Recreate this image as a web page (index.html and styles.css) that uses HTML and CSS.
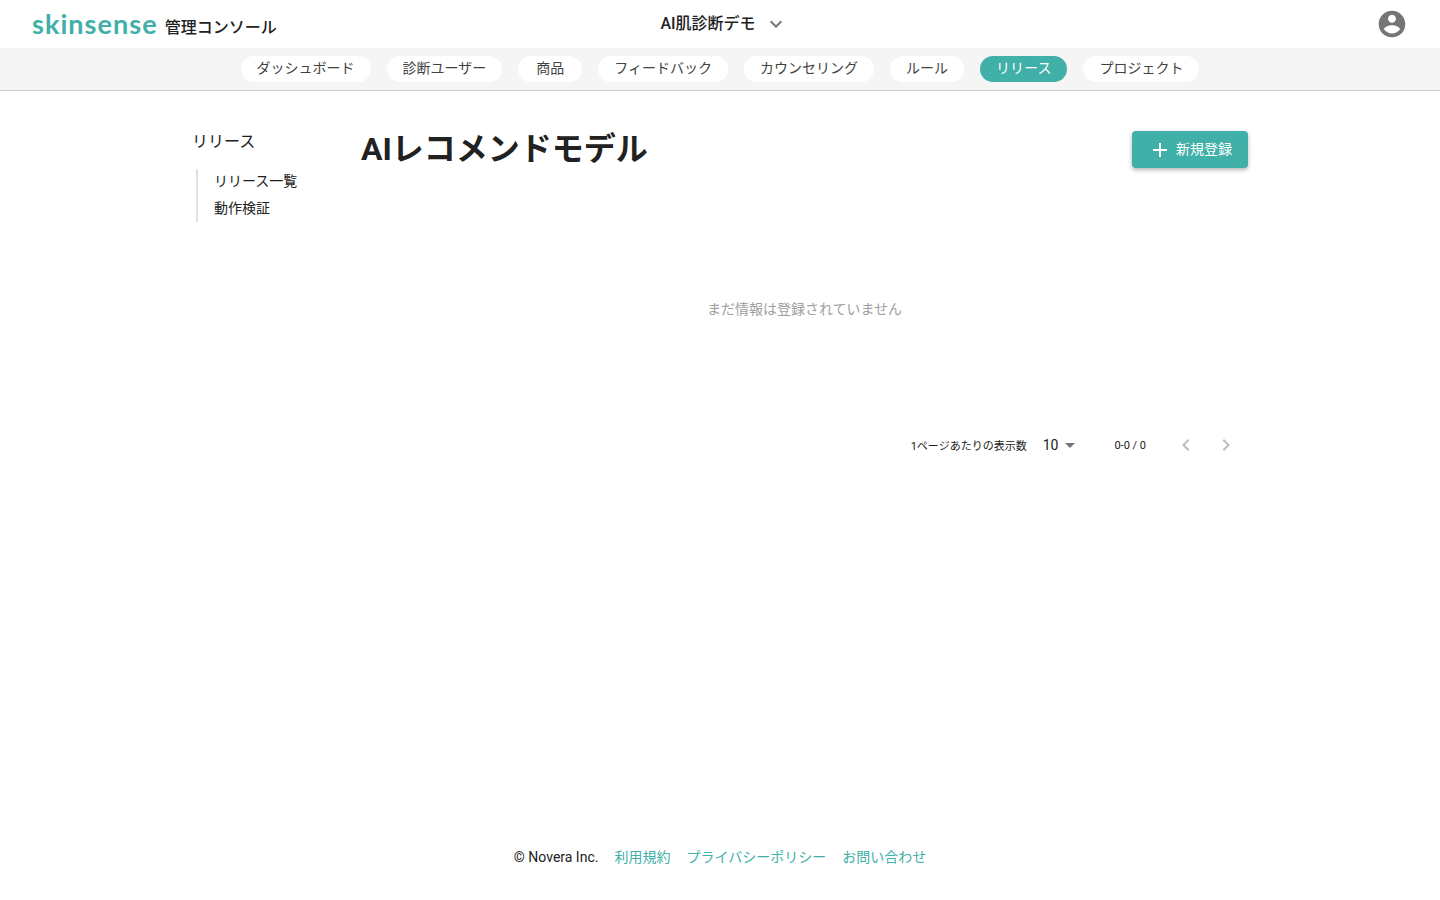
FILE: index.html
```html
<!DOCTYPE html>
<html lang="ja">
<head>
    <meta charset="UTF-8">
    <meta name="viewport" content="width=device-width, initial-scale=1.0">
    <title>AIレコメンドモデル - skinsense 管理コンソール</title>
    <link rel="stylesheet" href="styles.css">
</head>
<body>
    <header class="topbar">
        <div class="brand">
            <span class="logo">skinsense</span>
            <span class="brand-sub">管理コンソール</span>
        </div>
        <div class="tenant">
            <span class="tenant-name">AI肌診断デモ</span>
            <svg class="tenant-arrow" viewBox="0 0 24 24" width="24" height="24"><path d="M7.41 8.59 12 13.17l4.59-4.58L18 10l-6 6-6-6z"/></svg>
        </div>
        <svg class="account" viewBox="0 0 24 24" width="32" height="32"><path d="M12 2C6.48 2 2 6.48 2 12s4.48 10 10 10 10-4.48 10-10S17.52 2 12 2zm0 3c1.66 0 3 1.34 3 3s-1.34 3-3 3-3-1.34-3-3 1.34-3 3-3zm0 14.2c-2.5 0-4.71-1.28-6-3.22.03-1.99 4-3.08 6-3.08 1.99 0 5.97 1.09 6 3.08-1.29 1.94-3.5 3.22-6 3.22z"/></svg>
    </header>

    <nav class="tabs">
        <a class="tab">ダッシュボード</a>
        <a class="tab">診断ユーザー</a>
        <a class="tab">商品</a>
        <a class="tab">フィードバック</a>
        <a class="tab">カウンセリング</a>
        <a class="tab">ルール</a>
        <a class="tab active">リリース</a>
        <a class="tab">プロジェクト</a>
    </nav>

    <div class="page">
        <aside class="side">
            <div class="side-title">リリース</div>
            <ul class="side-list">
                <li>リリース一覧</li>
                <li>動作検証</li>
            </ul>
        </aside>
        <main class="content">
            <div class="content-head">
                <h1>AIレコメンドモデル</h1>
                <button class="add-btn">
                    <svg viewBox="0 0 24 24" width="24" height="24"><path d="M19 13h-6v6h-2v-6H5v-2h6V5h2v6h6v2z"/></svg>
                    <span class="add-label">新規登録</span>
                </button>
            </div>
            <p class="empty">まだ情報は登録されていません</p>
            <div class="pager">
                <span class="pager-label">1ページあたりの表示数</span>
                <span class="pager-select">10<i class="caret"></i></span>
                <span class="pager-range">0-0 / 0</span>
                <svg class="pager-arrow" viewBox="0 0 24 24" width="24" height="24"><path d="M15.41 7.41 14 6l-6 6 6 6 1.41-1.41L10.83 12z"/></svg>
                <svg class="pager-arrow" viewBox="0 0 24 24" width="24" height="24"><path d="M10 6 8.59 7.41 13.17 12l-4.58 4.59L10 18l6-6z"/></svg>
            </div>
        </main>
    </div>

    <footer class="footer">
        <span>© Novera Inc.</span>
        <a>利用規約</a>
        <a>プライバシーポリシー</a>
        <a>お問い合わせ</a>
    </footer>
</body>
</html>
```
FILE: styles.css
```css
* {
    box-sizing: border-box;
}

body {
    margin: 0;
    min-height: 100vh;
    display: flex;
    flex-direction: column;
    background: #fff;
    color: #212121;
    font-family: Roboto, "Noto Sans CJK JP", sans-serif;
    font-size: 14px;
}

.topbar {
    height: 48px;
    display: grid;
    grid-template-columns: 1fr auto 1fr;
    align-items: center;
    padding: 0 32px;
}

.brand {
    display: flex;
    align-items: baseline;
}

.logo {
    font-family: Lato, sans-serif;
    font-size: 27px;
    font-weight: 700;
    letter-spacing: 1.05px;
    color: #40b0a9;
    line-height: 48px;
}

.brand-sub {
    margin-left: 7px;
    font-size: 16px;
    font-weight: 500;
    position: relative;
    top: -1px;
}

.tenant {
    display: flex;
    align-items: center;
    gap: 8px;
    padding-left: 8px;
    font-size: 16px;
    font-weight: 500;
}

.tenant-name {
    padding-bottom: 4px;
}

.tenant-arrow {
    fill: #757575;
}

.account {
    justify-self: end;
    fill: #757575;
}

.tabs {
    height: 43px;
    display: flex;
    justify-content: center;
    align-items: center;
    gap: 16px;
    padding-bottom: 1px;
    background: #f5f5f5;
    border-bottom: 1px solid #c8c8c8;
}

.tab {
    height: 26px;
    min-width: 64px;
    line-height: 25px;
    padding: 0 16px;
    border-radius: 13px;
    background: #fff;
    color: #424242;
    text-align: center;
}

.tab.active {
    background: #40b0a9;
    color: #fff;
}

.page {
    width: 1056px;
    margin: 0 auto;
    display: flex;
}

.side {
    width: 169px;
    flex: none;
    padding-top: 41px;
}

.side-title {
    font-size: 16px;
    line-height: 20px;
}

.side-list {
    list-style: none;
    height: 53px;
    margin: 17px 0 0 4px;
    padding: 0 0 0 16px;
    border-left: 2px solid #e0e0e0;
}

.side-list li {
    height: 27px;
    line-height: 25px;
}

.content {
    flex: 1;
    padding-top: 40px;
}

.content-head {
    display: flex;
    justify-content: space-between;
    align-items: flex-start;
}

h1 {
    margin: 0;
    font-size: 32px;
    font-weight: 700;
    line-height: 36px;
}

.add-btn {
    height: 37px;
    display: flex;
    align-items: center;
    gap: 4px;
    padding: 0 16px;
    border: none;
    border-radius: 4px;
    background: #40b0a9;
    color: #fff;
    font: inherit;
    box-shadow: 0 2px 4px rgba(0, 0, 0, 0.3);
}

.add-btn svg {
    fill: #fff;
}

.add-label {
    padding-bottom: 4px;
}

.empty {
    margin: 131px 0 0;
    text-align: center;
    color: #9e9e9e;
    line-height: 20px;
}

.pager {
    margin-top: 114px;
    height: 24px;
    display: flex;
    justify-content: flex-end;
    align-items: center;
    padding-right: 10px;
    font-size: 11px;
}

.pager-label {
    margin-right: 16px;
    padding-bottom: 1px;
}

.pager-select {
    display: flex;
    align-items: center;
    font-size: 14px;
    margin-right: 39px;
}

.caret {
    margin-left: 7px;
    border-left: 5px solid transparent;
    border-right: 5px solid transparent;
    border-top: 5px solid #757575;
}

.pager-range {
    margin-right: 28px;
}

.pager-arrow {
    fill: #bdbdbd;
    margin-left: 16px;
}

.pager-range + .pager-arrow {
    margin-left: 0;
}

.footer {
    margin-top: auto;
    height: 87px;
    display: flex;
    justify-content: center;
    gap: 16px;
    line-height: 20px;
    padding-top: 34px;
}

.footer a {
    color: #40b0a9;
}
```
